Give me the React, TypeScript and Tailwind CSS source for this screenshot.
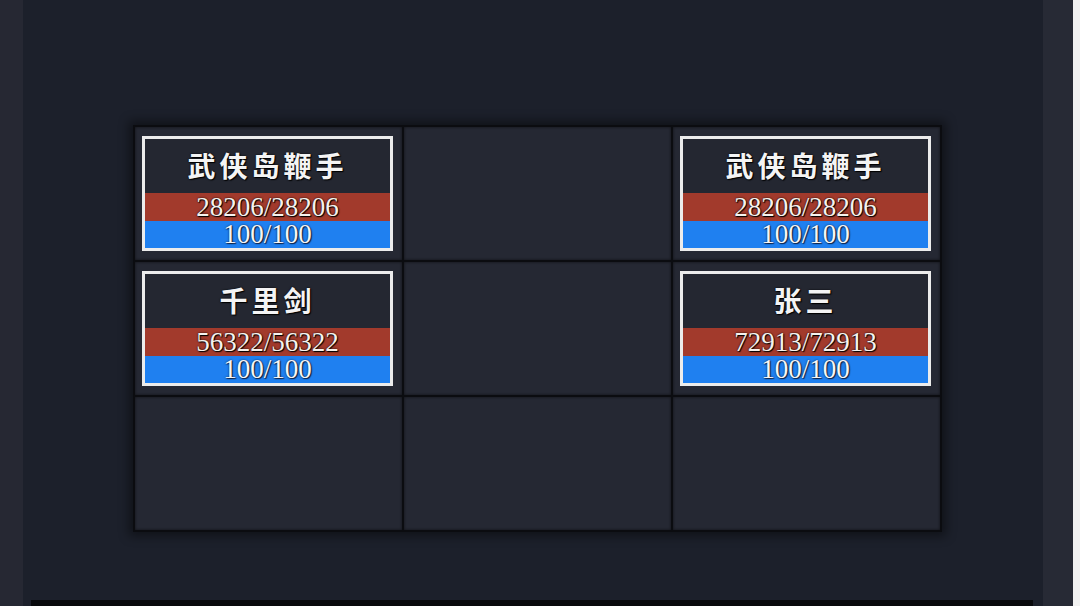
type Unit = { name: string; hp: string; mp: string };

const cells: (Unit | null)[] = [
  { name: '武侠岛鞭手', hp: '28206/28206', mp: '100/100' },
  null,
  { name: '武侠岛鞭手', hp: '28206/28206', mp: '100/100' },
  { name: '千里剑', hp: '56322/56322', mp: '100/100' },
  null,
  { name: '张三', hp: '72913/72913', mp: '100/100' },
  null,
  null,
  null,
];

function UnitCard({ unit }: { unit: Unit }) {
  return (
    <div className="w-[251px] border-[3px] border-[#ececec] bg-[#242731] flex flex-col">
      <div className="h-[54px] pb-[2px] flex items-center justify-center text-[28px] font-bold tracking-[4px] text-[#f4f4f4] [font-family:'Noto_Sans_CJK_SC',serif] [text-shadow:0_0_2px_#000,1px_1px_1px_#000]">
        {unit.name}
      </div>
      <div className="h-[28px] bg-[#a23a2c] flex items-center justify-center text-[27px] leading-none text-[#f6f2ee] [font-family:'Liberation_Serif',serif] [text-shadow:0_0_2px_#000,1px_1px_1px_#000]">
        {unit.hp}
      </div>
      <div className="h-[27px] bg-[#1f80f0] flex items-center justify-center text-[27px] leading-none text-[#f6f6f6] [font-family:'Liberation_Serif',serif] [text-shadow:0_0_2px_#102040,1px_1px_1px_#102040]">
        {unit.mp}
      </div>
    </div>
  );
}

export default function App() {
  return (
    <div className="h-[606px] w-full flex overflow-hidden bg-white">
      <div className="w-[23px] bg-[#262833]" />
      <div className="w-[1020px] bg-[#1c202b] flex flex-col">
        <div className="pt-[125px] pl-[110px]">
          <div className="inline-grid grid-cols-[267px_267px_267px] grid-rows-[133px_133px_133px] gap-[2px] p-[2px] bg-[#0b0c10] shadow-[0_0_10px_4px_rgba(0,0,0,0.45)]">
            {cells.map((unit, i) => (
              <div
                key={i}
                className="bg-[#252833] flex items-center justify-center pr-[2px] shadow-[inset_0_0_3px_rgba(0,0,0,0.6)]"
              >
                {unit && <UnitCard unit={unit} />}
              </div>
            ))}
          </div>
        </div>
        <div className="mt-auto ml-[8px] mr-[10px] h-[6px] bg-[#08090c]" />
      </div>
      <div className="w-[30px] bg-[#272a35]" />
      <div className="flex-1 bg-[#f2f2f2]" />
    </div>
  );
}
